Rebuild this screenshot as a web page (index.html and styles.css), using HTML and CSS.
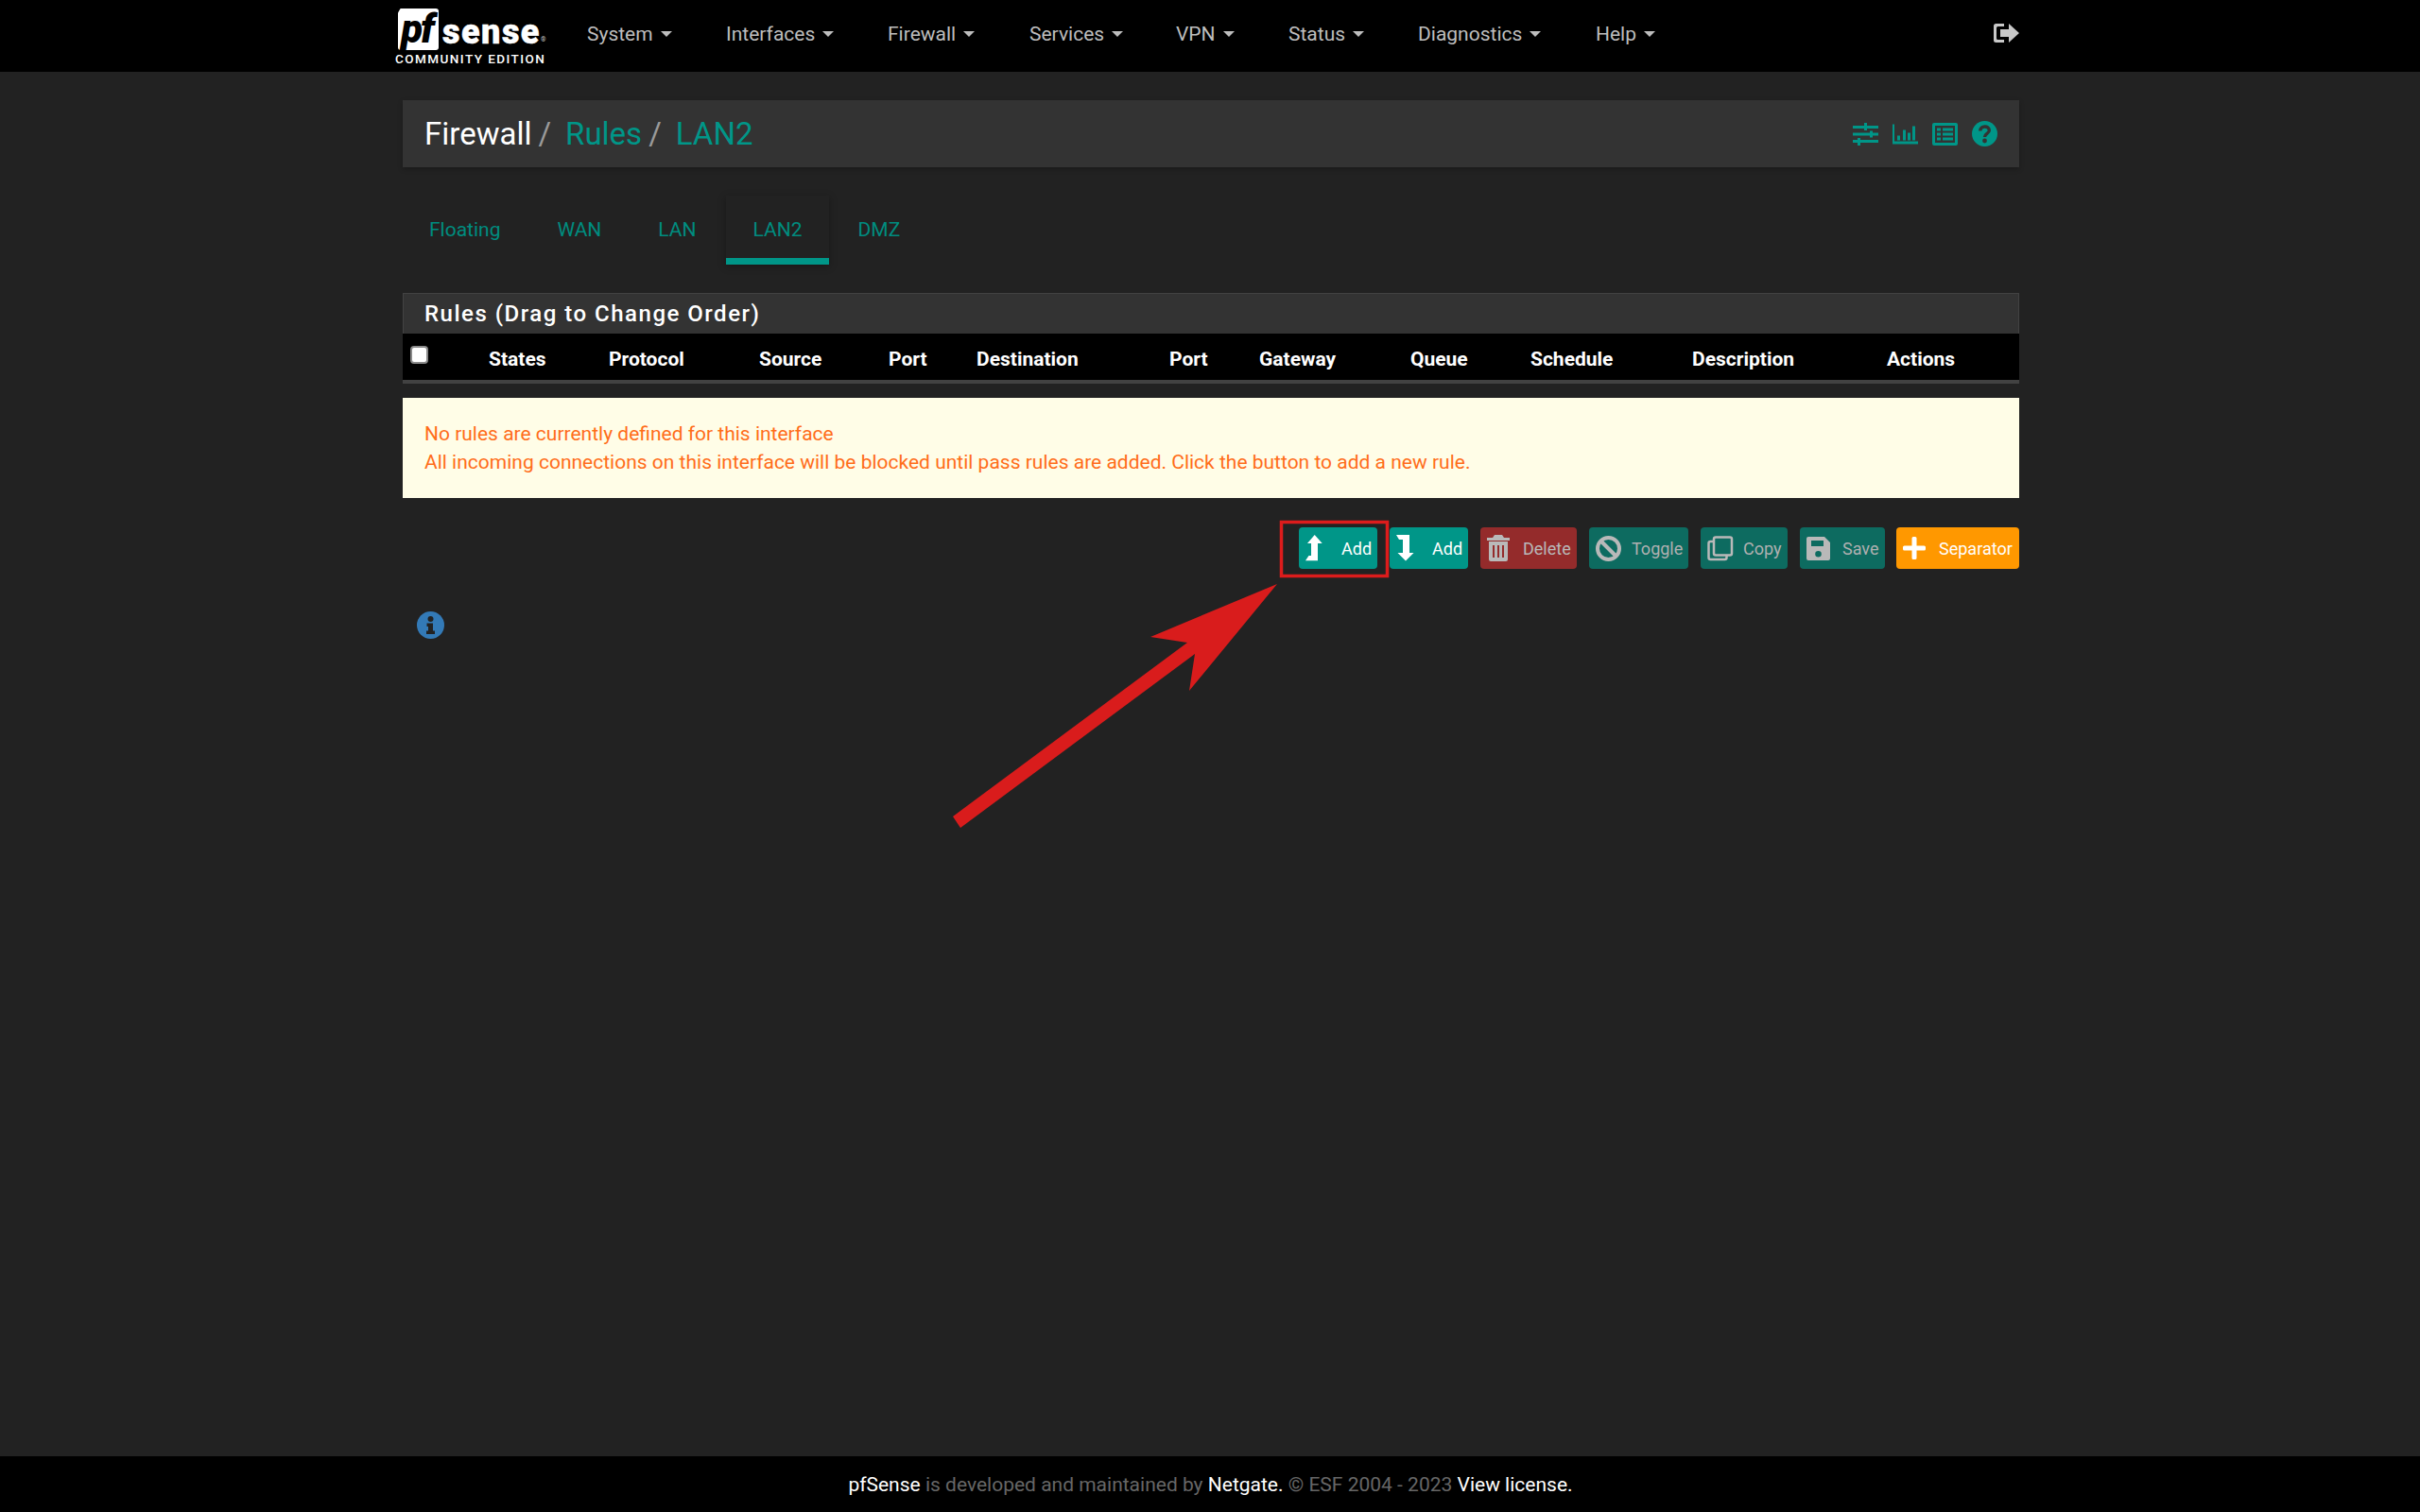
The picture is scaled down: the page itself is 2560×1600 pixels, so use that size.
FILE: index.html
```html
<!DOCTYPE html>
<html lang="en">
<head>
<meta charset="utf-8">
<title>pfSense - Firewall: Rules: LAN2</title>
<link rel="stylesheet" href="styles.css">
</head>
<body>
<header class="navbar">
  <div class="logo">
    <div class="logo-mark"><span class="logo-box"><span class="logo-pf">pf</span></span><span class="logo-sense">sense</span><span class="logo-reg">®</span></div>
    <div class="logo-edition">COMMUNITY EDITION</div>
  </div>
  <nav class="menu">
    <a class="menu-item m-system">System<i class="caret"></i></a>
    <a class="menu-item m-interfaces">Interfaces<i class="caret"></i></a>
    <a class="menu-item m-firewall">Firewall<i class="caret"></i></a>
    <a class="menu-item m-services">Services<i class="caret"></i></a>
    <a class="menu-item m-vpn">VPN<i class="caret"></i></a>
    <a class="menu-item m-status">Status<i class="caret"></i></a>
    <a class="menu-item m-diag">Diagnostics<i class="caret"></i></a>
    <a class="menu-item m-help">Help<i class="caret"></i></a>
  </nav>
  <svg class="logout" viewBox="0 0 27 20" aria-hidden="true"><path fill="#c8c8c8" d="M16 0l11 10-11 10v-6H7V6h9z"/><path fill="#c8c8c8" d="M2.500 0H11v3H4.500A1.500 1.500 0 0 0 3 4.500v11A1.500 1.500 0 0 0 4.500 17H11v3H2.500A2.500 2.500 0 0 1 0 17.500v-15A2.500 2.500 0 0 1 2.500 0z"/></svg>
</header>

<main class="page">
  <div class="container">
    <section class="page-head">
      <h1 class="crumbs"><span>Firewall</span><span class="sep">/</span><a>Rules</a><span class="sep">/</span><a>LAN2</a></h1>
      <div class="head-icons">
        <svg viewBox="0 0 27 24" class="hi"><path fill="#009688" d="M0 3h12V0h3v3h12v3H15v2h-3V6H0zM0 10.500h18V8.500h3v2h6v3h-6v2h-3v-2H0zM0 18h5v-2h3v2h19v3H8v3H5v-3H0z"/></svg>
        <svg viewBox="0 0 27 21" class="hi"><path fill="#009688" d="M0 0h2v18h25v3H0zM5 12h3v5H5zM11 6h3v11h-3zM16 9h3v8h-3zM21 2h3v15h-3z"/></svg>
        <svg viewBox="0 0 27 24" class="hi"><path fill="#009688" fill-rule="evenodd" d="M2 0h23a2 2 0 0 1 2 2v20a2 2 0 0 1-2 2H2a2 2 0 0 1-2-2V2a2 2 0 0 1 2-2zm1 3v18h21V3z"/><path fill="#009688" d="M5 5.500h4v3H5zM11 5.500h11v3H11zM5 10.500h4v3H5zM11 10.500h11v3H11zM5 15.500h4v3H5zM11 15.500h11v3H11z"/></svg>
        <svg viewBox="0 0 27 27" class="hi hi-help"><circle cx="13.500" cy="13.500" r="13.500" fill="#009688"/><path fill="none" stroke="#333" stroke-width="3.400" d="M8.800 10.500c0-6 9.500-6 9.500-.5 0 3.500-4.800 3.300-4.800 7"/><circle cx="13.500" cy="21" r="2.400" fill="#333"/></svg>
      </div>
    </section>

    <ul class="tabs">
      <li class="tab">Floating</li>
      <li class="tab">WAN</li>
      <li class="tab">LAN</li>
      <li class="tab active">LAN2</li>
      <li class="tab">DMZ</li>
    </ul>

    <section class="panel">
      <h2 class="panel-title">Rules (Drag to Change Order)</h2>
      <table class="rules">
        <colgroup>
          <col class="c1"><col class="c2"><col class="c3"><col class="c4"><col class="c5"><col class="c6"><col class="c7"><col class="c8"><col class="c9"><col class="c10"><col class="c11"><col class="c12">
        </colgroup>
        <thead>
          <tr>
            <th class="check"><input type="checkbox"></th>
            <th>States</th><th>Protocol</th><th>Source</th><th>Port</th><th>Destination</th><th>Port</th><th>Gateway</th><th>Queue</th><th>Schedule</th><th>Description</th><th>Actions</th>
          </tr>
        </thead>
      </table>
    </section>

    <div class="alert">
      <div>No rules are currently defined for this interface</div>
      <div>All incoming connections on this interface will be blocked until pass rules are added. Click the button to add a new rule.</div>
    </div>

    <div class="actions">
      <button class="btn teal w-add">
        <span class="ic"><svg width="18" height="28" viewBox="0 0 18 28"><path fill="#fff" d="M9.700 0l8 9H13v18.300H0L3.500 22H6V9H2z"/></svg></span>Add
      </button>
      <button class="btn teal w-add">
        <span class="ic"><svg width="19" height="28" viewBox="0 0 19 28"><path fill="#fff" d="M0 0h14v19h4.500L10 27.500 1.500 19H7V5H3z"/></svg></span>Add
      </button>
      <button class="btn red w-delete">
        <span class="ic"><svg width="24" height="28" viewBox="0 0 24 28"><path fill="#b9b9b9" fill-rule="evenodd" d="M8 0h8l2 3h6v3H0V3h6zM2 7h20v19a2 2 0 0 1-2 2H4a2 2 0 0 1-2-2zm4 4v13h2V11zm5 0v13h2V11zm5 0v13h2V11z"/></svg></span>Delete
      </button>
      <button class="btn dim w-toggle">
        <span class="ic"><svg width="27" height="27" viewBox="0 0 27 27"><circle cx="13.500" cy="13.500" r="11.500" fill="none" stroke="#b9b9b9" stroke-width="4"/><path stroke="#b9b9b9" stroke-width="4" d="M5.500 5.500l16 16"/></svg></span>Toggle
      </button>
      <button class="btn dim w-copy">
        <span class="ic"><svg width="28" height="28" viewBox="0 0 28 28"><path fill="none" stroke="#b9b9b9" stroke-width="2.500" d="M9 2.500h15a2 2 0 0 1 2 2v15a2 2 0 0 1-2 2H9a2 2 0 0 1-2-2v-15a2 2 0 0 1 2-2z"/><path fill="none" stroke="#b9b9b9" stroke-width="2.500" d="M6 7H3.500a2 2 0 0 0-2 2v15a2 2 0 0 0 2 2h15a2 2 0 0 0 2-2v-2"/></svg></span>Copy
      </button>
      <button class="btn dim w-save">
        <span class="ic"><svg width="25" height="25" viewBox="0 0 25 25"><path fill="#b9b9b9" fill-rule="evenodd" d="M2 0h17l6 6v17a2 2 0 0 1-2 2H2a2 2 0 0 1-2-2V2a2 2 0 0 1 2-2zm3 4v6h13V4zm7.500 11a3.300 3.300 0 1 0 0 6.600 3.300 3.300 0 0 0 0-6.600z"/></svg></span>Save
      </button>
      <button class="btn orange w-sep">
        <span class="ic"><svg width="24" height="24" viewBox="0 0 24 24"><path fill="#fff" d="M9.500 1.500a1.500 1.500 0 0 1 1.500-1.500h2a1.500 1.500 0 0 1 1.500 1.500v8h8a1.500 1.500 0 0 1 1.500 1.500v2a1.500 1.500 0 0 1-1.500 1.500h-8v8a1.500 1.500 0 0 1-1.500 1.500h-2a1.500 1.500 0 0 1-1.500-1.500v-8h-8A1.500 1.500 0 0 1 0 13v-2a1.500 1.500 0 0 1 1.500-1.500h8z"/></svg></span>Separator
      </button>
    </div>

    <div class="info">
      <svg viewBox="0 0 29 29" width="29" height="29"><circle cx="14.500" cy="14.500" r="14.500" fill="#337ab7"/><circle cx="14.500" cy="8" r="3" fill="#222"/><path fill="#222" d="M10.500 12.500h6.500v8h2V24h-9v-3.500h2V16h-1.500z"/></svg>
    </div>
  </div>

  <svg class="annotation" viewBox="0 0 2560 1600" aria-hidden="true">
    <rect x="1355.500" y="552.500" width="112" height="57" fill="none" stroke="#dc1c1c" stroke-width="3.500"/>
    <path fill="#d91c1c" d="M1351 618L1217 674 1256 680 1008 864 1016 876 1264 692 1258 731z"/>
  </svg>
</main>

<footer class="footer">
  <p><a>pfSense</a> is developed and maintained by <a>Netgate.</a> © ESF 2004 - 2023 <a>View license.</a></p>
</footer>
</body>
</html>
```
FILE: styles.css
```css
* { box-sizing: border-box; }
html, body { margin: 0; padding: 0; }
body {
  min-height: 1600px;
  display: flex;
  flex-direction: column;
  background: #222;
  color: #fff;
  font-family: Roboto, "Liberation Sans", sans-serif;
  font-size: 21px;
}

/* navbar */
.navbar {
  height: 76px;
  background: #000;
  display: flex;
  align-items: center;
  padding: 0 424px 0 418px;
  flex: none;
}
.logo { width: 160px; height: 76px; padding-top: 9px; display: flex; flex-direction: column; }
.logo-mark { display: flex; align-items: flex-end; height: 44px; padding-left: 3px; }
.logo-box {
  width: 43px; height: 44px;
  background: #fff;
  clip-path: polygon(6% 0, 100% 0, 100% 100%, 0 100%, 0 10%);
  display: flex; align-items: center; justify-content: center;
  border-radius: 3px;
}
.logo-pf { color: #000; font: italic 900 42px/44px Roboto, sans-serif; letter-spacing: -2px; margin-left: -3px; }
.logo-sense { color: #fff; font: 900 36px/36px Roboto, sans-serif; margin: 0 0 1px 4px; letter-spacing: 1.500px; -webkit-text-stroke: .5px #fff; }
.logo-reg { font-size: 7px; color: #ccc; margin-bottom: 7px; }
.logo-edition { font-size: 13.500px; font-weight: 500; letter-spacing: 1.450px; line-height: 14px; margin-top: 2px; white-space: nowrap; }

.menu { display: flex; margin: -4px 0 0 43px; flex: 1; }
.menu-item { color: #bdbdbd; display: flex; align-items: center; white-space: nowrap; }
.caret { width: 0; height: 0; margin-left: 8px; border: 6px solid transparent; border-top-color: #bdbdbd; border-bottom: 0; }
.m-system { width: 147px; }
.m-interfaces { width: 171px; }
.m-firewall { width: 150px; }
.m-services { width: 155px; }
.m-vpn { width: 119px; }
.m-status { width: 137px; }
.m-diag { width: 188px; }
.logout { width: 27px; height: 20px; margin-top: -7px; }

/* page */
.page { flex: 1; position: relative; }
.container { width: 1710px; margin-left: 426px; padding-top: 30px; }
.page-head {
  height: 71px;
  background: #333;
  box-shadow: 0 2px 5px rgba(0,0,0,.26);
  display: flex; align-items: center; justify-content: space-between;
  padding: 0 23px;
}
.crumbs { margin: 0; font-size: 33px; font-weight: 400; display: flex; line-height: 43px; }
.crumbs a { color: #009688; }
.sep { color: #9a9a9a; margin: 0 15px 0 7px; }
.head-icons { display: flex; align-items: center; gap: 15px; }
.hi { width: 27px; height: 24px; display: block; }
.hi-help { height: 27px; }

.tabs { list-style: none; margin: 30px 0 0 -1px; padding: 0; display: flex; gap: 2px; height: 73px; }
.tab { padding: 0 29px; line-height: 72px; color: #008c7f; height: 73px; }
.tab.active { border-bottom: 7px solid #009688; box-shadow: 0 2px 8px rgba(0,0,0,.3); width: 109px; }

.panel { margin-top: 30px; border: 1px solid #424242; border-bottom-width: 4px; }
.panel-title {
  margin: 0; height: 42px;
  background: #333;
  font-size: 24px; font-weight: 500; letter-spacing: 1.500px; line-height: 42px;
  padding-left: 22px;
}
.rules { width: 1710px; margin-left: -1px; table-layout: fixed; border-collapse: collapse; background: #000; }
.rules th { height: 49px; padding: 5px 0 0 1px; text-align: left; font-size: 21px; font-weight: 700; }
.rules .check { padding: 0 0 5px 8px; }
.rules input {
  appearance: none;
  width: 19px; height: 19px; margin: 0; display: block;
  background: #fff;
  border: 2px solid #8a8a8a;
  border-radius: 4px;
}
.c1 { width: 90px; } .c2 { width: 127px; } .c3 { width: 159px; } .c4 { width: 137px; }
.c5 { width: 93px; } .c6 { width: 204px; } .c7 { width: 95px; } .c8 { width: 160px; }
.c9 { width: 127px; } .c10 { width: 171px; } .c11 { width: 206px; } .c12 { width: 141px; }

.alert {
  margin-top: 15px;
  background: #fffde7;
  color: #ff6d1a;
  padding: 23px;
  line-height: 30px;
}

.actions { margin-top: 31px; display: flex; justify-content: flex-end; gap: 13px; }
.btn {
  height: 44px;
  border: 0;
  border-radius: 4px;
  padding: 0 0 0 7px;
  display: flex; align-items: center;
  font: 400 18px Roboto, sans-serif;
  white-space: nowrap;
}
.w-add { width: 83px; }
.w-delete { width: 102px; }
.w-toggle { width: 105px; }
.w-copy { width: 92px; }
.w-save { width: 90px; }
.w-sep { width: 130px; margin-left: -1px; }
.ic { width: 38px; display: flex; align-items: center; flex: none; }
.teal { background: #009688; color: #fff; }
.dim { background: #0d6b60; color: #b0b0b0; }
.red { background: #942b2b; color: #b9b9b9; }
.orange { background: #ff9800; color: #fff; }

.info { margin-top: 45px; padding-left: 15px; height: 29px; }
.info svg { display: block; }

.annotation { position: absolute; left: 0; top: -76px; width: 2560px; height: 1600px; pointer-events: none; }

.footer { height: 59px; background: #000; flex: none; text-align: center; color: #666; }
.footer p { margin: 0; line-height: 60px; padding-left: 1px; }
.footer a { color: #fff; }
```
